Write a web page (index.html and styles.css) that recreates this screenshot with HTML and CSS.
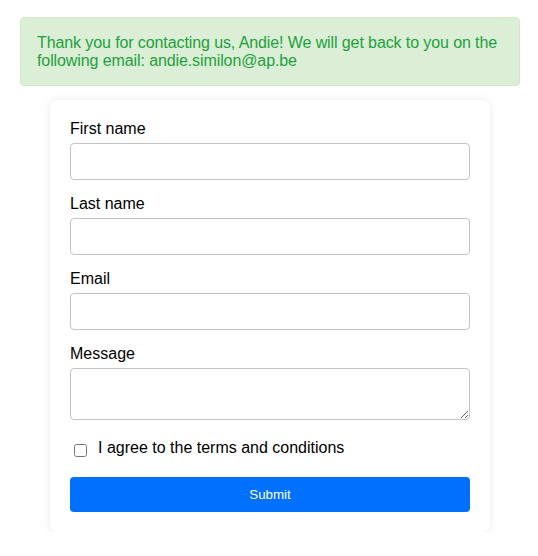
FILE: index.html
```html
<!DOCTYPE html>
<html>
<head>
<meta charset="utf-8">
<link rel="stylesheet" href="styles.css">
</head>
<body>
<div class="page">
  <div class="alert">Thank you for contacting us, Andie! We will get back to you on the following email: andie.similon@ap.be</div>
  <form class="card">
    <div class="group">
      <label class="label" for="fn">First name</label>
      <input class="input" id="fn" type="text">
    </div>
    <div class="group">
      <label class="label" for="ln">Last name</label>
      <input class="input" id="ln" type="text">
    </div>
    <div class="group">
      <label class="label" for="em">Email</label>
      <input class="input" id="em" type="email">
    </div>
    <div class="group">
      <label class="label" for="msg">Message</label>
      <textarea class="input textarea" id="msg"></textarea>
    </div>
    <label class="check">
      <input type="checkbox" class="checkbox">
      <span>I agree to the terms and conditions</span>
    </label>
    <button type="button" class="submit">Submit</button>
  </form>
</div>
</body>
</html>
```
FILE: styles.css
```css
html, body {
  margin: 0;
  padding: 0;
  background: #fff;
}
body {
  font-family: "Liberation Sans", Arial, sans-serif;
  color: #000;
}
.page {
  padding: 17px 18px 0 20px;
  display: flex;
  flex-direction: column;
  align-items: center;
}
.alert {
  box-sizing: border-box;
  width: 500px;
  background: #dbefd6;
  color: #22a03c;
  font-size: 16px;
  line-height: 18px;
  padding: 16px 6px 15px 16px;
  letter-spacing: -0.1px;
  border-radius: 4px;
  border: 1px solid #d2e9cc;
  margin-bottom: 14px;
}
.card {
  box-sizing: border-box;
  width: 440px;
  background: #fff;
  border-radius: 8px;
  padding: 20px 20px 20px 20px;
  box-shadow: 0 0 10px rgba(0, 0, 0, 0.09);
  display: flex;
  flex-direction: column;
}
.group {
  display: flex;
  flex-direction: column;
  margin-bottom: 15px;
}
.label {
  font-size: 16px;
  line-height: 18px;
  margin-bottom: 5px;
}
.input {
  box-sizing: border-box;
  width: 400px;
  height: 37px;
  border: 1px solid #c4c4c4;
  border-radius: 4px;
  margin: 0;
  padding: 8px;
  font-family: "Liberation Sans", Arial, sans-serif;
  font-size: 14px;
}
.textarea {
  height: 52px;
  resize: vertical;
}
.check {
  display: flex;
  align-items: center;
  font-size: 16px;
  line-height: 18px;
  margin-top: 3px;
  margin-bottom: 20px;
}
.checkbox {
  width: 13px;
  height: 13px;
  margin: 6px 11px 0 4px;
}
.submit {
  height: 35px;
  width: 400px;
  border: none;
  border-radius: 4px;
  background: #0070ff;
  color: #fff;
  font-family: "Liberation Sans", Arial, sans-serif;
  font-size: 13.3px;
}
```
